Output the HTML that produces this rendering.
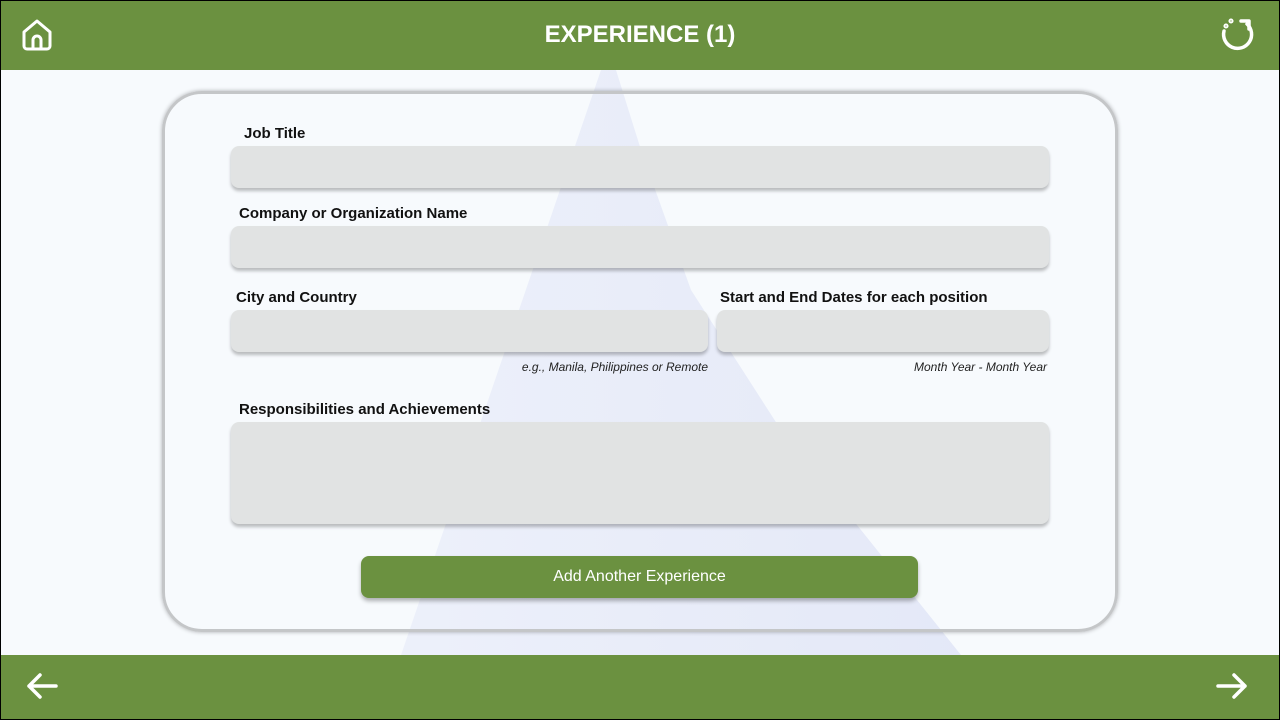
<!DOCTYPE html>
<html><head><style>
*{box-sizing:border-box;margin:0;padding:0}
body{width:1280px;height:720px;overflow:hidden;font-family:"Liberation Sans",sans-serif;background:#f7fafd;position:relative}
.hdr{position:absolute;left:0;top:0;width:1280px;height:70px;background:#6b9140;border:1px solid #000;border-bottom:none}
.hdr h1{position:absolute;left:0;right:0;top:20px;text-align:center;color:#fff;font-size:24px;font-weight:bold}
.ftr{position:absolute;left:0;top:655px;width:1280px;height:65px;background:#6b9140;border:1px solid #000;border-top:none}
.bg{position:absolute;left:0;top:70px;width:1280px;height:585px;overflow:hidden;border-left:1px solid #000;border-right:1px solid #000}
.tri{position:absolute;left:400px;top:0;width:560px;height:585px;background:linear-gradient(90deg,rgba(228,232,248,0.55),rgba(220,225,245,0.7));clip-path:polygon(200px 0,215px 0,240px 80px,290px 220px,380px 360px,560px 585px,0 585px)}
.card{position:absolute;left:162px;top:91px;width:956px;height:541px;border:3px solid #c4c6c8;border-radius:40px;box-shadow:0 0 4px rgba(0,0,0,.3)}
.lbl{position:absolute;font-size:15px;font-weight:bold;color:#111}
.in{position:absolute;background:#e1e3e3;border-radius:8px;box-shadow:0 3px 3px rgba(0,0,0,.25)}
.hint{position:absolute;font-size:12px;font-style:italic;color:#222;text-align:right}
.btn{position:absolute;left:361px;top:556px;width:557px;height:42px;background:#6b9140;border-radius:8px;color:#fff;font-size:16px;text-align:center;line-height:42px;box-shadow:0 3px 4px rgba(0,0,0,.3)}
</style></head><body>
<div class="bg"><div class="tri"></div></div>
<div class="hdr"><h1>EXPERIENCE (1)</h1>
<svg style="position:absolute;left:19px;top:17px" width="34" height="34" viewBox="0 0 34 34" fill="none" stroke="#fff" stroke-width="3" stroke-linejoin="round"><path d="M4 14 L17 3 L30 14 V28 a3 3 0 0 1 -3 3 H7 a3 3 0 0 1 -3 -3 Z"/><path d="M13 31 V22 a4 4 0 0 1 8 0 V31"/></svg>
<svg style="position:absolute;left:1217px;top:14px" width="40" height="40" viewBox="0 0 40 40" fill="none" stroke="#fff" stroke-width="3.5" stroke-linecap="round"><path d="M29 9 A14 14 0 1 1 6 16"/><path d="M23 6 L31 6 L31 14" stroke-linejoin="round"/><circle cx="8" cy="11" r="0.8" fill="#fff"/><circle cx="13" cy="6" r="0.8" fill="#fff"/></svg>
</div>
<div class="card"></div>
<div class="lbl" style="left:244px;top:125px">Job Title</div>
<div class="in" style="left:231px;top:146px;width:818px;height:42px"></div>
<div class="lbl" style="left:239px;top:205px">Company or Organization Name</div>
<div class="in" style="left:231px;top:226px;width:818px;height:42px"></div>
<div class="lbl" style="left:236px;top:289px">City and Country</div>
<div class="lbl" style="left:720px;top:289px">Start and End Dates for each position</div>
<div class="in" style="left:231px;top:310px;width:477px;height:42px"></div>
<div class="in" style="left:717px;top:310px;width:332px;height:42px"></div>
<div class="hint" style="left:400px;width:308px;top:360px">e.g., Manila, Philippines or Remote</div>
<div class="hint" style="left:800px;width:247px;top:360px">Month Year - Month Year</div>
<div class="lbl" style="left:239px;top:401px">Responsibilities and Achievements</div>
<div class="in" style="left:231px;top:422px;width:818px;height:102px"></div>
<div class="btn">Add Another Experience</div>
<div class="ftr">
<svg style="position:absolute;left:24px;top:16px" width="34" height="30" viewBox="0 0 34 30" fill="none" stroke="#fff" stroke-width="3.5" stroke-linecap="round" stroke-linejoin="round"><path d="M31 15 H4 M15 4 L4 15 L15 26"/></svg>
<svg style="position:absolute;left:1214px;top:16px" width="34" height="30" viewBox="0 0 34 30" fill="none" stroke="#fff" stroke-width="3.5" stroke-linecap="round" stroke-linejoin="round"><path d="M3 15 H30 M19 4 L30 15 L19 26"/></svg>
</div>
</body></html>
